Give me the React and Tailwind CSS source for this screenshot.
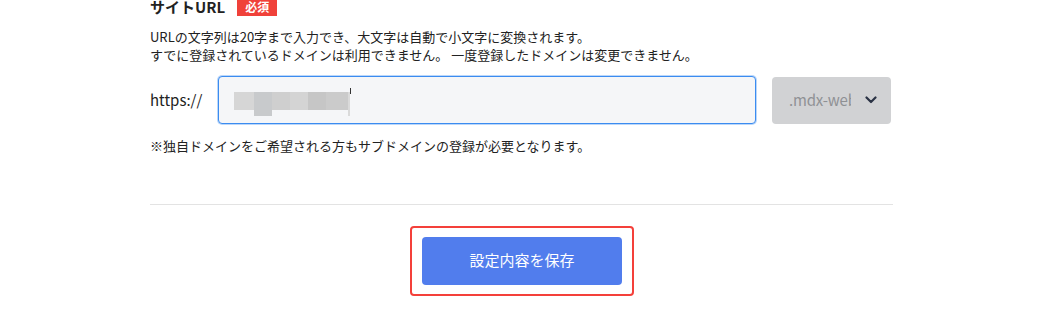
import React from 'react';

const font = { fontFamily: '"Noto Sans CJK JP", "Noto Sans", sans-serif' };

export default function App() {
  return (
    <div className="w-[1054px] h-[317px] bg-white text-[#222]" style={font}>
      <div className="w-[743px] ml-[150px]">
        {/* Heading */}
        <div className="flex items-center h-[17px] -mt-[1px]">
          <span className="text-[15px] font-bold leading-[17px] -mt-[3px]">サイトURL</span>
          <span className="ml-[12px] h-[18px] px-[8px] bg-[#f0413a] text-white text-[12px] font-bold leading-[18px] -mt-[1px]">必須</span>
        </div>

        {/* Help text */}
        <div className="mt-[12px] text-[13px] leading-[18px]">
          <p>URLの文字列は20字まで入力でき、大文字は自動で小文字に変換されます。</p>
          <p>すでに登録されているドメインは利用できません。 一度登録したドメインは変更できません。</p>
        </div>

        {/* Input row */}
        <div className="mt-[12px] flex items-center h-[48px]">
          <span className="w-[68px] text-[15px] text-[#222]">https://</span>
          <div className="relative w-[538px] h-[48px] rounded-[4px] border border-[#3b8cf0] bg-[#f5f6f8] shadow-[0_0_0_1px_rgba(59,140,240,0.35)]">
            {/* blurred value */}
            <div className="absolute left-[15px] top-[15px] flex h-[18px]">
              <div className="w-[20px] bg-[#d6d6d6]" />
              <div className="w-[18px] bg-[#c8cacc] h-[24px]" />
              <div className="w-[18px] bg-[#cfcfcf]" />
              <div className="w-[18px] bg-[#d4d4d4]" />
              <div className="w-[18px] bg-[#c6c6c6]" />
              <div className="w-[22px] bg-[#cbcbcb]" />
              <div className="w-[2px] bg-[#dadada] h-[24px]" />
              <div className="w-[1px] bg-[#333] -mt-[4px] h-[6px]" />
            </div>
          </div>
          <div className="ml-[16px] w-[119px] h-[47px] rounded-[4px] bg-[#d1d2d4] flex items-center pl-[17px] pr-[14px]">
            <span className="text-[15px] tracking-[-0.2px] text-[#8f9194] w-[62px] overflow-hidden whitespace-nowrap">.mdx-web</span>
            <svg className="ml-auto" width="12" height="8" viewBox="0 0 12 8" fill="none">
              <path d="M1.5 1.5 L6 6 L10.5 1.5" stroke="#2b3345" strokeWidth="2.2" strokeLinecap="round" strokeLinejoin="round" />
            </svg>
          </div>
        </div>

        {/* Note */}
        <p className="mt-[13px] text-[13px] leading-[18px]">※独自ドメインをご希望される方もサブドメインの登録が必要となります。</p>

        <div className="mt-[49px] h-px bg-[#e3e3e3]" />

        {/* Save button */}
        <div className="flex justify-center mt-[21px]">
          <div className="ml-[1px] w-[224px] h-[70px] rounded-[4px] border-2 border-[#f4403a] flex items-center justify-center">
            <button className="w-[200px] h-[48px] rounded-[4px] bg-[#517ded] text-white text-[15px] -mt-[1px]">
              設定内容を保存
            </button>
          </div>
        </div>
      </div>
    </div>
  );
}
